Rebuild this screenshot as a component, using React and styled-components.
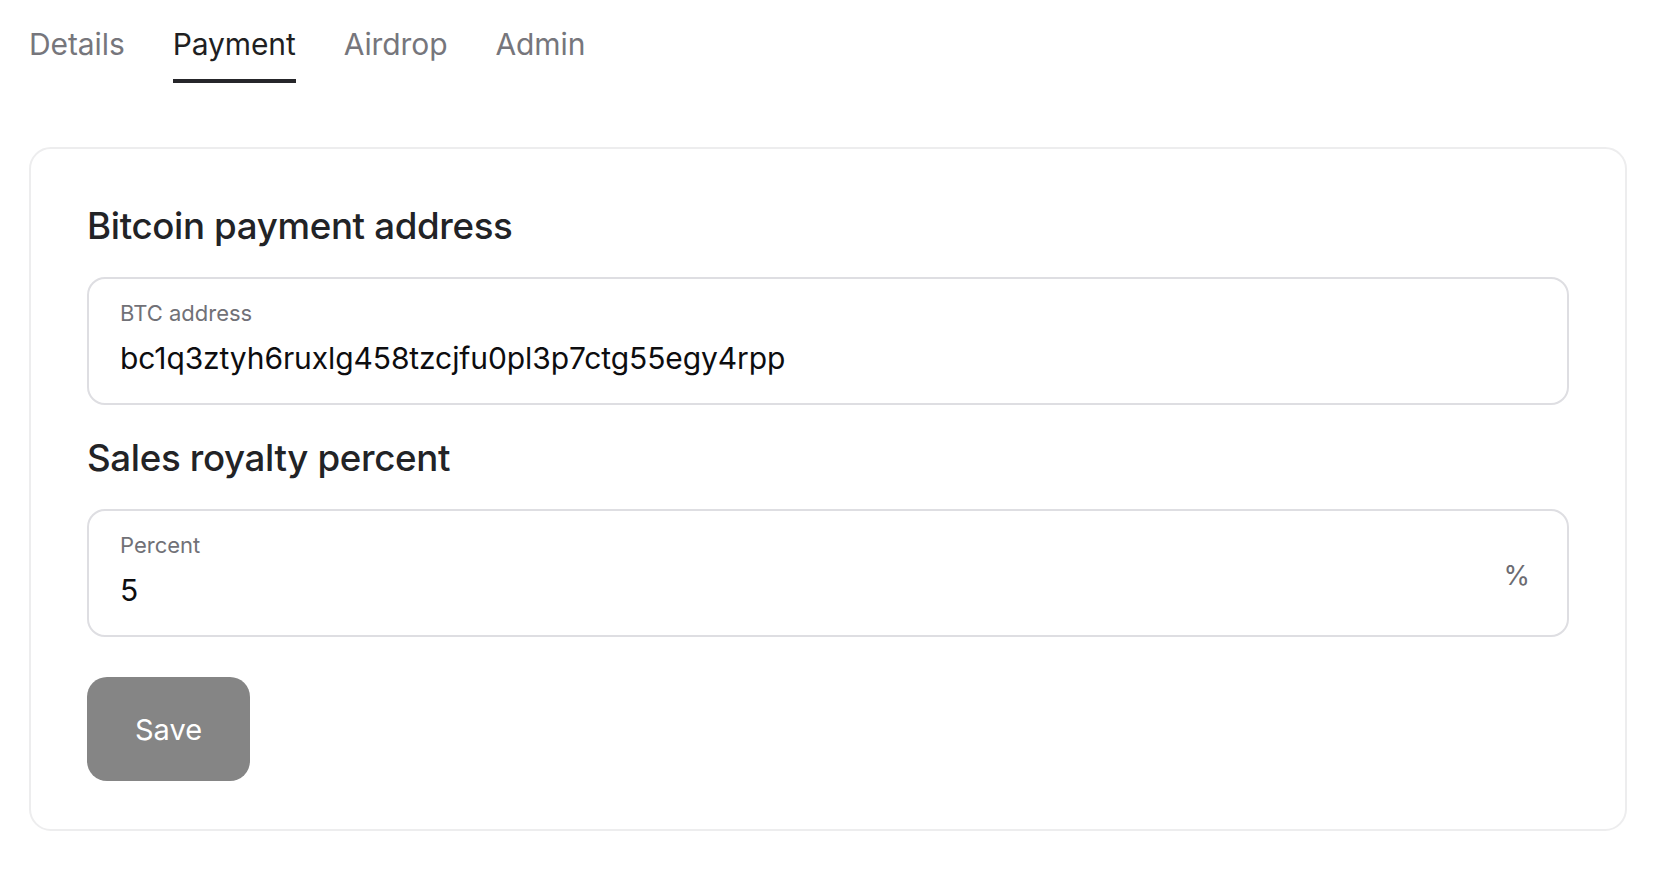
import React, { useState } from 'react'
import styled, { createGlobalStyle } from 'styled-components'

const GlobalStyle = createGlobalStyle`
  html, body {
    margin: 0;
    padding: 0;
    background: #ffffff;
  }
  body {
    font-family: Inter, 'Noto Sans', 'Liberation Sans', sans-serif;
    -webkit-font-smoothing: antialiased;
  }
`

const tabs = ['Details', 'Payment', 'Airdrop', 'Admin']

const App = () => {
  const [active, setActive] = useState('Payment')
  const [address, setAddress] = useState('bc1q3ztyh6ruxlg458tzcjfu0pl3p7ctg55egy4rpp')
  const [percent, setPercent] = useState('5')

  return (
    <Page>
      <GlobalStyle />
      <TabBar>
        {tabs.map(t => (
          <Tab key={t} $active={t === active} onClick={() => setActive(t)}>
            {t}
          </Tab>
        ))}
      </TabBar>

      <Card>
        <Section>
          <SectionTitle>Bitcoin payment address</SectionTitle>
          <Field>
            <FieldBody>
              <Label htmlFor='btc'>BTC address</Label>
              <Input id='btc' value={address} onChange={e => setAddress(e.target.value)} />
            </FieldBody>
          </Field>
        </Section>

        <Section>
          <SectionTitle>Sales royalty percent</SectionTitle>
          <Field>
            <FieldBody>
              <Label htmlFor='pct'>Percent</Label>
              <Input id='pct' value={percent} onChange={e => setPercent(e.target.value)} />
            </FieldBody>
            <Suffix>%</Suffix>
          </Field>
        </Section>

        <SaveButton type='button'>Save</SaveButton>
      </Card>
    </Page>
  )
}

const Page = styled.div`
  padding: 26px 33px 40px 29px;
`

const TabBar = styled.nav`
  display: flex;
  gap: 48px;
`

const Tab = styled.button`
  font-family: inherit;
  font-size: 30px;
  line-height: 36px;
  font-weight: 400;
  letter-spacing: -0.1px;
  color: ${p => (p.$active ? '#1f1f22' : '#76767c')};
  background: none;
  border: none;
  border-bottom: 4px solid ${p => (p.$active ? '#26262a' : 'transparent')};
  padding: 0 0 17px;
  cursor: pointer;
`

const Card = styled.section`
  margin-top: 64px;
  border: 2px solid #ededee;
  border-radius: 22px;
  padding: 55px 56px 48px;
  display: flex;
  flex-direction: column;
`

const Section = styled.div`
  display: flex;
  flex-direction: column;
  gap: 29px;
  margin-bottom: 31px;

  & + button {
    margin-top: 9px;
  }
`

const SectionTitle = styled.h2`
  margin: 0;
  font-size: 36.7px;
  line-height: 44px;
  font-weight: 500;
  letter-spacing: -0.35px;
  color: #222326;
`

const Field = styled.div`
  display: flex;
  align-items: center;
  border: 2px solid #dedee2;
  border-radius: 18px;
  padding: 21px 37px 27px 31px;
`

const FieldBody = styled.div`
  flex: 1;
  display: flex;
  flex-direction: column;
  gap: 14px;
`

const Label = styled.label`
  font-size: 22px;
  line-height: 26px;
  color: #717177;
`

const Input = styled.input`
  font-family: inherit;
  font-size: 30px;
  line-height: 36px;
  height: 36px;
  padding: 0;
  border: none;
  outline: none;
  color: #0d0d0f;
  background: transparent;
  letter-spacing: -0.1px;
`

const Suffix = styled.span`
  font-size: 27px;
  color: #6c6c72;
  margin-top: 10px;
`

const SaveButton = styled.button`
  align-self: flex-start;
  width: 163px;
  height: 104px;
  border: none;
  border-radius: 20px;
  background: #858585;
  color: #ffffff;
  font-family: inherit;
  font-size: 29px;
  font-weight: 400;
  cursor: pointer;
`

export default App
